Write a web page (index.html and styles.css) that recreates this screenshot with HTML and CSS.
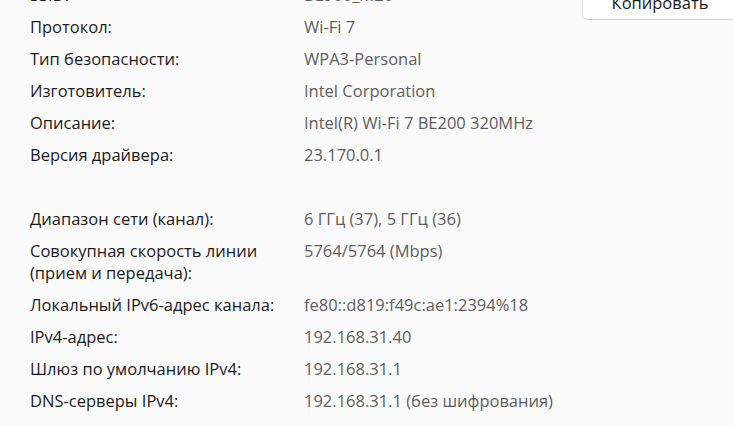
FILE: index.html
```html
<!DOCTYPE html>
<html lang="ru">
<head>
<meta charset="utf-8">
<link rel="stylesheet" href="styles.css">
</head>
<body>
<div class="panel">
  <div class="row first">
    <div class="label">SSID:</div>
    <div class="value">BE900_M20</div>
    <button class="copy">Копировать</button>
  </div>
  <div class="row"><div class="label">Протокол:</div><div class="value">Wi-Fi 7</div></div>
  <div class="row"><div class="label">Тип безопасности:</div><div class="value">WPA3-Personal</div></div>
  <div class="row"><div class="label">Изготовитель:</div><div class="value">Intel Corporation</div></div>
  <div class="row"><div class="label">Описание:</div><div class="value">Intel(R) Wi-Fi 7 BE200 320MHz</div></div>
  <div class="row"><div class="label">Версия драйвера:</div><div class="value">23.170.0.1</div></div>
  <div class="spacer"></div>
  <div class="row"><div class="label">Диапазон сети (канал):</div><div class="value">6 ГГц (37), 5 ГГц (36)</div></div>
  <div class="row"><div class="label">Совокупная скорость линии<br>(прием и передача):</div><div class="value">5764/5764 (Mbps)</div></div>
  <div class="row"><div class="label">Локальный IPv6-адрес канала:</div><div class="value">fe80::d819:f49c:ae1:2394%18</div></div>
  <div class="row"><div class="label">IPv4-адрес:</div><div class="value">192.168.31.40</div></div>
  <div class="row"><div class="label">Шлюз по умолчанию IPv4:</div><div class="value">192.168.31.1</div></div>
  <div class="row"><div class="label">DNS-серверы IPv4:</div><div class="value">192.168.31.1 (без шифрования)</div></div>
  <div class="row"><div class="label">Физический адрес (MAC):</div><div class="value">A4-6B-40-12-7C-9E</div></div>
</div>
</body>
</html>
```
FILE: styles.css
```css
html, body {
  margin: 0;
  padding: 0;
  background: #fbfafa;
  overflow: hidden;
  height: 426px;
}
body {
  font-family: "Open Sans", "Noto Sans", sans-serif;
  font-size: 16.5px;
  color: #1b1b1b;
}
.panel {
  margin-top: -16px;
  padding-left: 30px;
  display: flex;
  flex-direction: column;
  gap: 10px;
}
.row {
  display: grid;
  grid-template-columns: 274px 1fr auto;
  line-height: 22px;
  align-items: start;
}
.value {
  color: #5e5e5e;
}
.spacer {
  height: 22px;
}
.copy {
  font: inherit;
  color: #1b1b1b;
  background: #fefefe;
  border: 1px solid #e6e6e6;
  border-bottom-color: #d0d0d0;
  border-radius: 5px;
  width: 156px;
  height: 34px;
  margin-top: 2px;
  margin-bottom: -14px;
  margin-right: -5px;
  padding: 0;
}
```
